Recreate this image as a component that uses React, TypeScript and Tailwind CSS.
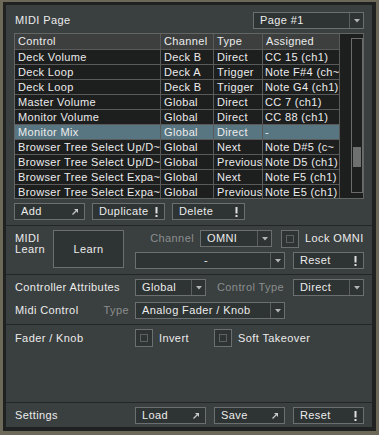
import React from "react";

type Row = { control: string; channel: string; type: string; assigned: string; active?: boolean };

const rows: Row[] = [
  { control: "Deck Volume", channel: "Deck B", type: "Direct", assigned: "CC 15 (ch1)" },
  { control: "Deck Loop", channel: "Deck A", type: "Trigger", assigned: "Note F#4 (ch~" },
  { control: "Deck Loop", channel: "Deck B", type: "Trigger", assigned: "Note G4 (ch1)" },
  { control: "Master Volume", channel: "Global", type: "Direct", assigned: "CC 7 (ch1)" },
  { control: "Monitor Volume", channel: "Global", type: "Direct", assigned: "CC 88 (ch1)" },
  { control: "Monitor Mix", channel: "Global", type: "Direct", assigned: "-", active: true },
  { control: "Browser Tree Select Up/D~", channel: "Global", type: "Next", assigned: "Note D#5 (c~" },
  { control: "Browser Tree Select Up/D~", channel: "Global", type: "Previous", assigned: "Note D5 (ch1)" },
  { control: "Browser Tree Select Expa~", channel: "Global", type: "Next", assigned: "Note F5 (ch1)" },
  { control: "Browser Tree Select Expa~", channel: "Global", type: "Previous", assigned: "Note E5 (ch1)" },
];

function ArrowIcon() {
  return (
    <svg width="6" height="6" viewBox="0 0 6 6">
      <polygon points="2,0 6,0 6,4" fill="#c8caca" />
      <line x1="0.5" y1="5.5" x2="4" y2="2" stroke="#c8caca" strokeWidth="1.2" />
    </svg>
  );
}

function BangIcon() {
  return (
    <svg width="3" height="10" viewBox="0 0 3 10">
      <rect x="0.5" y="0" width="2" height="6.5" fill="#e0e0e0" />
      <rect x="0.5" y="8" width="2" height="2" fill="#e0e0e0" />
    </svg>
  );
}

function Btn({ label, icon, className = "" }: { label: string; icon?: "arrow" | "bang"; className?: string }) {
  return (
    <div
      className={`flex h-[17px] items-center justify-between border border-[#6b6f6f] bg-[#2e3333] pl-[6px] pr-[6px] leading-none ${className}`}
    >
      <span>{label}</span>
      {icon === "arrow" && <ArrowIcon />}
      {icon === "bang" && <BangIcon />}
    </div>
  );
}

function Select({ value, className = "", center = false }: { value: string; className?: string; center?: boolean }) {
  return (
    <div className={`flex h-[17px] items-stretch border border-[#6b6f6f] bg-[#2e3333] leading-none ${className}`}>
      <div className={`flex flex-1 items-center pl-[6px] ${center ? "justify-center" : ""}`}>{value}</div>
      <div className="flex w-[14px] items-center justify-center border-l border-[#5b5f5f]">
        <svg width="6" height="4" viewBox="0 0 6 4">
          <polygon points="0,0 6,0 3,3.5" fill="#b4b6b6" />
        </svg>
      </div>
    </div>
  );
}

function Check({ label }: { label: string }) {
  return (
    <div className="flex items-center gap-[6px]">
      <div className="flex h-[18px] w-[18px] items-center justify-center border border-[#6b6f6f] bg-[#2e3333]">
        <div className="h-[8px] w-[8px] border border-[#5d6161]" />
      </div>
      <span>{label}</span>
    </div>
  );
}

function Sep() {
  return <div className="h-px bg-[#222626]" />;
}

export default function App() {
  return (
    <div className="h-[435px] w-[379px] bg-[#6c6959] pb-[4px] pl-[3px] pr-[3px] pt-[2px] font-['Liberation_Sans',Arial,sans-serif] text-[11px] tracking-[0.4px] text-[#ececec]">
      <div className="flex h-full flex-col border-b-[4px] border-l-[3px] border-r-[4px] border-t-[3px] border-[#1f2220] bg-[#3a3f3f]">
        {/* page + table */}
        <div className="h-[220px] px-2 pt-[7px]">
          <div className="flex h-[17px] items-center justify-between">
            <span className="pl-[1px]">MIDI Page</span>
            <Select value="Page #1" className="w-[111px]" />
          </div>
          <div className="mt-[4px] flex h-[166px] overflow-hidden border border-[#646666] bg-[#1d1e1e]">
            <div className="w-[325px] border-r border-[#5a5a5a] tracking-[0.35px]">
              <div className="flex h-[16px] border-b border-[#5a5a5a] bg-[#3d3f3f] leading-[15px]">
                <div className="w-[146px] border-r border-[#5a5a5a] pl-[3px]">Control</div>
                <div className="w-[53px] border-r border-[#5a5a5a] pl-[3px]">Channel</div>
                <div className="w-[49px] border-r border-[#5a5a5a] pl-[3px]">Type</div>
                <div className="flex-1 pl-[3px]">Assigned</div>
              </div>
              {rows.map((r, i) => (
                <div
                  key={i}
                  className={`flex h-[15px] border-b border-[#5a5a5a] leading-[14px] ${r.active ? "bg-[#587682]" : ""}`}
                >
                  <div className="w-[146px] overflow-hidden whitespace-nowrap border-r border-[#5a5a5a] pl-[3px]">{r.control}</div>
                  <div className="w-[53px] overflow-hidden whitespace-nowrap border-r border-[#5a5a5a] pl-[3px]">{r.channel}</div>
                  <div className="w-[49px] overflow-hidden whitespace-nowrap border-r border-[#5a5a5a] pl-[3px]">{r.type}</div>
                  <div className="flex-1 overflow-hidden whitespace-nowrap pl-[2px]">{r.assigned}</div>
                </div>
              ))}
            </div>
            <div className="flex-1 pb-[5px] pl-[11px] pt-[4px]">
              <div className="h-full w-[12px] border border-[#6a6c6c] bg-[#1d1e1e] pt-[108px]">
                <div className="mx-px h-[20px] bg-[#6e7070]" />
              </div>
            </div>
          </div>
          <div className="mt-[4px] flex gap-[7px]">
            <Btn label="Add" icon="arrow" className="w-[71px]" />
            <Btn label="Duplicate" icon="bang" className="w-[73px]" />
            <Btn label="Delete" icon="bang" className="w-[73px]" />
          </div>
        </div>
        <Sep />
        {/* midi learn */}
        <div className="flex h-[48px] px-2 pt-[4px]">
          <div className="flex w-[121px]">
            <div className="w-[39px] pl-[1px] pt-[3px] leading-[11px]">
              MIDI
              <br />
              Learn
            </div>
            <div className="flex h-[38px] w-[71px] items-center justify-center border border-[#6b6f6f] bg-[#2e3333]">
              Learn
            </div>
          </div>
          <div className="flex w-[229px] flex-col gap-[5px]">
            <div className="flex h-[17px] items-center">
              <span className="w-[65px] pr-[6px] text-right text-[#8a8e8e]">Channel</span>
              <Select value="OMNI" className="w-[72px]" />
              <div className="ml-[9px]">
                <Check label="Lock OMNI" />
              </div>
            </div>
            <div className="flex gap-[8px]">
              <Select value="-" center className="w-[150px]" />
              <Btn label="Reset" icon="bang" className="flex-1" />
            </div>
          </div>
        </div>
        <Sep />
        {/* controller attributes */}
        <div className="flex h-[49px] flex-col gap-[6px] px-2 pt-[4px]">
          <div className="flex items-center">
            <span className="w-[121px] pl-[1px]">Controller Attributes</span>
            <div className="grid w-[229px] grid-cols-3 gap-2">
              <Select value="Global" />
              <span className="self-center pl-[3px] text-[#8a8e8e]">Control Type</span>
              <Select value="Direct" />
            </div>
          </div>
          <div className="flex items-center">
            <span className="w-[89px] pl-[1px]">Midi Control</span>
            <span className="w-[32px] pr-[6px] text-right text-[#8a8e8e]">Type</span>
            <Select value="Analog Fader / Knob" className="w-[150px]" />
          </div>
        </div>
        <Sep />
        {/* fader / knob */}
        <div className="flex h-[77px] px-2 pt-[4px]">
          <span className="w-[121px] pl-[1px] pt-[1px]">Fader / Knob</span>
          <div className="grid h-[18px] w-[229px] grid-cols-3 gap-2">
            <Check label="Invert" />
            <div className="col-span-2">
              <Check label="Soft Takeover" />
            </div>
          </div>
        </div>
        <Sep />
        {/* settings */}
        <div className="flex flex-1 px-2 pt-[4px]">
          <span className="w-[121px] pl-[1px] leading-[17px]">Settings</span>
          <div className="grid h-[17px] w-[229px] grid-cols-3 gap-2">
            <Btn label="Load" icon="arrow" />
            <Btn label="Save" icon="arrow" />
            <Btn label="Reset" icon="bang" />
          </div>
        </div>
      </div>
    </div>
  );
}
